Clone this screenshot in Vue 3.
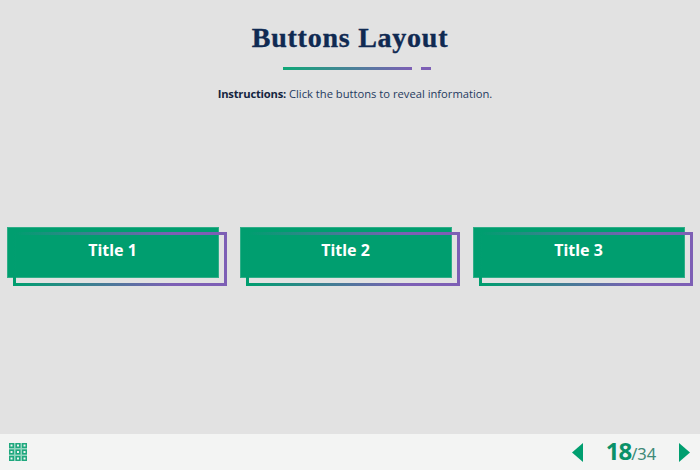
<script setup>
const titles = ['Title 1', 'Title 2', 'Title 3']
const cells = []
for (const y of [0, 6.5, 13]) for (const x of [0, 6.5, 13]) cells.push({ x, y })
</script>

<template>
  <div class="slide">
    <header class="head">
      <h1 class="title">Buttons Layout</h1>
      <div class="rule">
        <span class="rule-long"></span>
        <span class="rule-short"></span>
      </div>
      <p class="instr"><b>Instructions:</b> Click the buttons to reveal information.</p>
    </header>
    <main class="row">
      <button v-for="t in titles" :key="t" class="btn">
        <span class="label">{{ t }}</span>
        <span class="frame"></span>
      </button>
    </main>
    <footer class="bar">
      <svg class="grid" width="18" height="18" viewBox="0 0 18 18">
        <rect width="18" height="18" fill="#93d5bf" />
        <g v-for="(c, i) in cells" :key="i">
          <rect :x="c.x" :y="c.y" width="5" height="5" fill="#1fa87e" />
          <rect :x="c.x + 1.5" :y="c.y + 1.5" width="2" height="2" fill="#f3f4f3" />
        </g>
      </svg>
      <div class="pager">
        <svg class="arrow" width="11" height="19" viewBox="0 0 11 19"><path d="M11 0V19L0 9.5Z" fill="#009e6f" /></svg>
        <div class="count"><span class="cur">18</span><span class="tot">/34</span></div>
        <svg class="arrow" width="11" height="19" viewBox="0 0 11 19"><path d="M0 0V19L11 9.5Z" fill="#009e6f" /></svg>
      </div>
    </footer>
  </div>
</template>

<style>
html, body { margin: 0; padding: 0; }
</style>

<style scoped>
.slide {
  width: 700px;
  height: 470px;
  background: #e2e2e2;
  display: flex;
  flex-direction: column;
  overflow: hidden;
}
.head {
  height: 227px;
  display: flex;
  flex-direction: column;
  align-items: center;
  flex: none;
}
.title {
  margin: 21px 0 0;
  font: bold 28px/34px "Liberation Serif", serif;
  letter-spacing: 0.75px;
  color: #102a52;
  -webkit-text-stroke: 0.35px #102a52;
}
.rule {
  display: flex;
  gap: 9px;
  margin-top: 12px;
  margin-left: 13px;
}
.rule-long {
  width: 129px;
  height: 3px;
  background: linear-gradient(90deg, #0fa877, #7d5fb5);
}
.rule-short {
  width: 10px;
  height: 3px;
  background: #7d5fb5;
}
.instr {
  margin: 16px 0 0 10px;
  font: 11.2px/16px "Open Sans", sans-serif;
  color: #1f3a60;
}
.instr b { color: #14253f; font-weight: 700; letter-spacing: -0.2px; }
.row {
  flex: 1;
  display: flex;
  gap: 21px;
  padding-left: 7px;
  align-items: flex-start;
}
.btn {
  position: relative;
  width: 212px;
  height: 51px;
  padding: 0 0 5px 0;
  border: 0;
  background: #009e6f;
  box-shadow: inset 0 0 0 1px #2fae87;
  color: #fff;
  font: bold 16px/22px "Noto Sans", sans-serif;
}
.label { position: relative; left: -0.5px; }
.frame {
  position: absolute;
  left: 6px;
  top: 5px;
  width: 208px;
  height: 48px;
  border: 3px solid;
  border-image: linear-gradient(90deg, #009e6f, #7d5fb5 75%) 1;
}
.bar {
  height: 36px;
  flex: none;
  background: #f3f4f3;
  display: flex;
  align-items: center;
  justify-content: space-between;
  padding: 0 10px 0 9px;
}
.pager {
  display: flex;
  align-items: center;
}
.count {
  width: 96px;
  text-align: center;
  color: #0a9168;
  font-family: "Noto Sans", sans-serif;
  line-height: 36px;
}
.cur { font-size: 24px; font-weight: 700; letter-spacing: -1px; }
.tot { font-size: 16.5px; color: #3f8a78; }
</style>
